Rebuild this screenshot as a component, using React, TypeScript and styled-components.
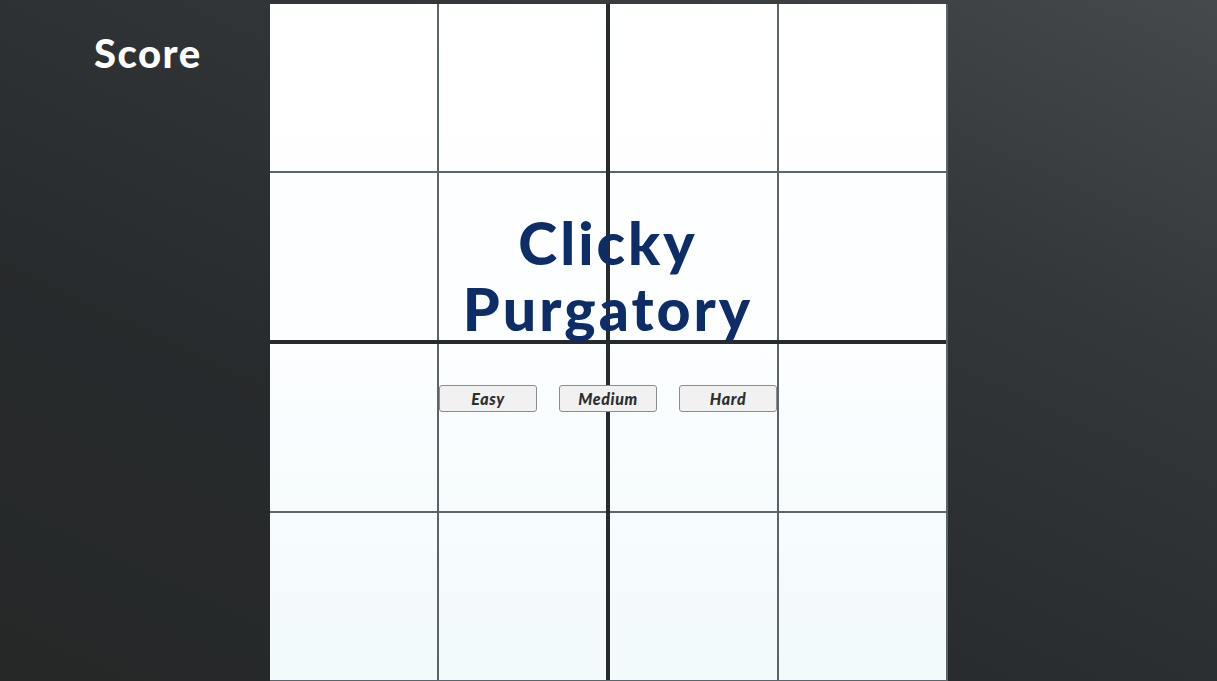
import React, { FC } from "react";
import styled, { createGlobalStyle } from "styled-components";

const GlobalStyle = createGlobalStyle`
  html, body {
    margin: 0;
    padding: 0;
    height: 100%;
  }
  body {
    font-family: "Lato", "Open Sans", sans-serif;
    background: #2a2d2f;
  }
  #root {
    height: 100%;
  }
`;

const Page = styled.div`
  display: flex;
  width: 100%;
  height: 681px;
  overflow: hidden;
  background: linear-gradient(205deg, #45494c 0%, #33373a 30%, #282b2d 65%, #262828 100%);
`;

const ScorePanel = styled.div`
  width: 270px;
  flex-shrink: 0;
  padding: 29px 0 0 94px;
  box-sizing: border-box;
`;

const ScoreLabel = styled.h2`
  margin: 0;
  color: #ffffff;
  font-family: "Lato", sans-serif;
  font-weight: 900;
  font-size: 40px;
  line-height: 48px;
  letter-spacing: 1.5px;
`;

const Board = styled.div`
  position: relative;
  margin-top: 4px;
  display: grid;
  grid-template-columns: repeat(2, 336px);
  grid-template-rows: repeat(2, 336px);
  gap: 4px;
  background: #262b2d;
  border-right: 2px solid #5a6469;
  border-bottom: 2px solid #5a6469;
  align-self: flex-start;
`;

const Quadrant = styled.div`
  display: grid;
  grid-template-columns: repeat(2, 167px);
  grid-template-rows: repeat(2, 167px);
  gap: 2px;
  background: #5a6469;
`;

const Cell = styled.div`
  background: linear-gradient(to bottom, #ffffff 0%, #fdfeff 45%, #f2fafc 100%) fixed;
`;

const Overlay = styled.div`
  position: absolute;
  left: 0;
  right: 0;
  top: 206px;
  display: flex;
  flex-direction: column;
  align-items: center;
  pointer-events: none;
`;

const Title = styled.h1`
  margin: 0;
  color: #0c2d68;
  font-family: "Lato", sans-serif;
  font-weight: 900;
  font-size: 59px;
  line-height: 66px;
  letter-spacing: 3px;
  text-align: center;
`;

const Difficulty = styled.div`
  display: flex;
  gap: 22px;
  margin-top: 43px;
  pointer-events: auto;
`;

const DifficultyButton = styled.button`
  width: 98px;
  height: 27px;
  padding: 0;
  background: #f1f1f1;
  border: 1px solid #8a8c8d;
  border-radius: 3px;
  color: #2e2e2e;
  font-family: "Lato", sans-serif;
  font-weight: 900;
  font-style: italic;
  font-size: 16px;
  letter-spacing: 0.6px;
  cursor: pointer;
`;

const levels = ["Easy", "Medium", "Hard"];

const App: FC = () => {
  return (
    <>
      <GlobalStyle />
      <Page>
        <ScorePanel>
          <ScoreLabel>Score</ScoreLabel>
        </ScorePanel>
        <Board>
          {[0, 1, 2, 3].map((q) => (
            <Quadrant key={q}>
              {[0, 1, 2, 3].map((c) => (
                <Cell key={c} />
              ))}
            </Quadrant>
          ))}
          <Overlay>
            <Title>
              Clicky
              <br />
              Purgatory
            </Title>
            <Difficulty>
              {levels.map((level) => (
                <DifficultyButton key={level}>{level}</DifficultyButton>
              ))}
            </Difficulty>
          </Overlay>
        </Board>
      </Page>
    </>
  );
};

export default App;
